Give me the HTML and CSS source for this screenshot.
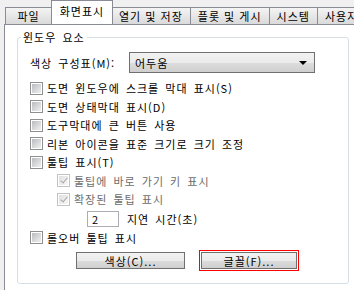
FILE: index.html
```html
<!DOCTYPE html>
<html lang="ko">
<head>
  <meta charset="UTF-8" />
  <title>옵션 - 화면표시</title>
  <link rel="stylesheet" href="styles.css">
</head>
<body>

<div class="tabs">
  <div class="tab first">파일</div>
  <div class="tab active">화면표시</div>
  <div class="tab">열기 및 저장</div>
  <div class="tab">플롯 및 게시</div>
  <div class="tab">시스템</div>
  <div class="tab last">사용자 기본 설정</div>
</div>

<div class="panel">
  <div class="group">
    <span class="legend">윈도우 요소</span>

    <div class="scheme-row">
      <span class="scheme-label">색상 구성표(M):</span>
      <div class="select">
        <span>어두움</span>
        <span class="arrow"></span>
      </div>
    </div>

    <label class="check"><span class="box"></span>도면 윈도우에 스크롤 막대 표시(S)</label>
    <label class="check"><span class="box"></span>도면 상태막대 표시(D)</label>
    <label class="check"><span class="box"></span>도구막대에 큰 버튼 사용</label>
    <label class="check"><span class="box"></span>리본 아이콘을 표준 크기로 크기 조정</label>
    <label class="check"><span class="box"></span>툴팁 표시(T)</label>
    <label class="check sub disabled"><span class="box checked"></span>툴팁에 바로 가기 키 표시</label>
    <label class="check sub disabled"><span class="box checked"></span>확장된 툴팁 표시</label>
    <div class="delay-row">
      <span class="spin">2</span>
      <span>지연 시간(초)</span>
    </div>
    <label class="check"><span class="box"></span>롤오버 툴팁 표시</label>

    <div class="buttons">
      <button class="btn color-btn">색상(C)...</button>
      <span class="marked"><button class="btn font-btn">글꼴(F)...</button></span>
    </div>
  </div>
</div>

</body>
</html>
```

FILE: styles.css
```css
body {
  margin: 0;
  background-color: #f0f0f0;
  font-family: "Noto Sans CJK KR", "Noto Sans", sans-serif;
  font-size: 11px;
  letter-spacing: 1px;
  word-spacing: 2px;
  color: #000;
  overflow: hidden;
  height: 290px;
}

.tabs {
  display: flex;
  align-items: flex-end;
  height: 24px;
  padding-left: 5px;
  white-space: nowrap;
  overflow: hidden;
  word-spacing: 0;
}

.tab {
  height: 17px;
  line-height: 17px;
  padding: 0 7px;
  border: 1px solid #898c95;
  border-bottom: none;
  border-left: none;
  background: linear-gradient(#f4f4f4, #dadada);
  box-sizing: border-box;
  flex-shrink: 0;
}

.tab.first {
  border-left: 1px solid #898c95;
  width: 47px;
  text-align: center;
}

.tab.active {
  height: 25px;
  line-height: 20px;
  background: #fff;
  border-left: 1px solid #898c95;
  margin: 0 -1px -1px -1px;
  width: 62px;
  text-align: center;
  position: relative;
  z-index: 1;
}

.panel {
  background: #fff;
  margin-left: 4px;
  border-left: 1px solid #898c95;
  border-top: 1px solid #898c95;
  height: 253px;
  padding: 12px 5px 0 12px;
}

.group {
  position: relative;
  padding: 0 0 0 12px;
  border: 1px solid #d5dfe5;
  border-radius: 3px;
  width: 332px;
  box-sizing: border-box;
  height: 247px;
}

.legend {
  position: absolute;
  left: 3px;
  top: -8px;
  padding: 0 2px;
  background: #fff;
  line-height: 14px;
}

.scheme-row {
  display: flex;
  align-items: center;
  height: 21px;
  margin-top: 14px;
}

.scheme-label {
  width: 99px;
}

.select {
  width: 186px;
  height: 21px;
  box-sizing: border-box;
  border: 1px solid #707070;
  background: linear-gradient(#f2f2f2 0%, #ebebeb 50%, #dddddd 51%, #cfcfcf 100%);
  display: flex;
  align-items: center;
  justify-content: space-between;
  padding: 0 7px 0 5px;
}

.arrow {
  width: 0;
  height: 0;
  border-left: 4px solid transparent;
  border-right: 4px solid transparent;
  border-top: 4px solid #000;
}

.check {
  display: flex;
  align-items: center;
  height: 18.5px;
}

.scheme-row + .check {
  margin-top: 6px;
}

.box {
  width: 13px;
  height: 13px;
  box-sizing: border-box;
  border: 1px solid #8e8f8f;
  background: #fff;
  margin-right: 4px;
  flex-shrink: 0;
  position: relative;
}

.box::before {
  content: "";
  position: absolute;
  left: 1px;
  top: 1px;
  width: 9px;
  height: 9px;
  background: linear-gradient(135deg, #b9bcc0, #f0f0f0);
}

.check.sub {
  padding-left: 27px;
}

.check.disabled {
  color: #6d6d6d;
}

.check.disabled .box {
  border-color: #c3c3c3;
}

.check.disabled .box::before {
  background: linear-gradient(135deg, #e0e0e0, #f7f7f7);
}

.box.checked::after {
  content: "";
  position: absolute;
  left: 4px;
  top: 1px;
  width: 3px;
  height: 6px;
  border-right: 1.5px solid #a8a8a8;
  border-bottom: 1.5px solid #a8a8a8;
  transform: rotate(40deg);
}

.delay-row {
  display: flex;
  align-items: center;
  height: 20px;
  padding-left: 57px;
}

.spin {
  width: 32px;
  height: 16px;
  box-sizing: border-box;
  border: 1px solid #abadb3;
  padding-left: 4px;
  line-height: 14px;
  margin-right: 8px;
}

.buttons {
  display: flex;
  align-items: center;
  margin-top: 3px;
  padding-left: 46px;
}

.btn {
  height: 17px;
  box-sizing: border-box;
  border: 1px solid #707070;
  background: linear-gradient(#f2f2f2 0%, #ebebeb 50%, #dddddd 51%, #cfcfcf 100%);
  font-family: inherit;
  font-size: 11px;
  letter-spacing: 1px;
  padding: 0;
  line-height: 14px;
  color: #000;
}

.color-btn {
  width: 109px;
  margin-right: 14px;
}

.font-btn {
  width: 96px;
}

.marked {
  display: inline-flex;
  border: 1px solid #ff0000;
  padding: 1px;
}
```
